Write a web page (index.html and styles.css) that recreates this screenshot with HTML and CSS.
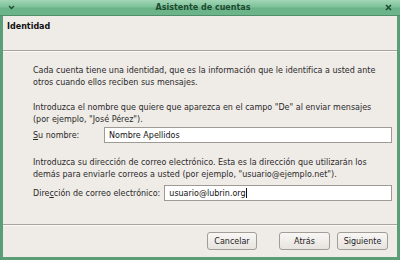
FILE: index.html
```html
<!DOCTYPE html>
<html lang="es">
<head>
<meta charset="utf-8">
<title>Asistente de cuentas</title>
<link rel="stylesheet" href="styles.css">
</head>
<body>
<div class="window">
  <div class="titlebar">
    <span class="menu-btn"><svg width="7" height="5" viewBox="0 0 7 5"><path d="M1 1 L3.5 3.5 L6 1" fill="none" stroke="#1e4a30" stroke-width="1.4"/></svg></span>
    <span class="title">Asistente de cuentas</span>
    <span class="close-btn"><svg width="7" height="7" viewBox="0 0 7 7"><path d="M1 1 L6 6 M6 1 L1 6" stroke="#1e4a30" stroke-width="1.6"/></svg></span>
  </div>
  <div class="body">
    <div class="header">Identidad</div>
    <div class="content">
      <p class="para">Cada cuenta tiene una identidad, que es la información que le identifica a usted ante<br>otros cuando ellos reciben sus mensajes.</p>
      <p class="para p2">Introduzca el nombre que quiere que aparezca en el campo "De" al enviar mensajes<br>(por ejemplo, "José Pérez").</p>
      <div class="row row-name">
        <label class="lbl lbl-name"><u>S</u>u nombre:</label>
        <div class="field">Nombre Apellidos</div>
      </div>
      <p class="para p3">Introduzca su dirección de correo electrónico. Esta es la dirección que utilizarán los<br>demás para enviarle correos a usted (por ejemplo, "usuario@ejemplo.net").</p>
      <div class="row row-mail">
        <label class="lbl">Dire<u>c</u>ción de correo electrónico:</label>
        <div class="field">usuario@lubrin.org<span class="caret"></span></div>
      </div>
    </div>
    <div class="footer">
      <button class="btn btn-cancel">Cancelar</button>
      <button class="btn btn-back">Atrás</button>
      <button class="btn btn-next">Siguiente</button>
    </div>
  </div>
</div>
</body>
</html>
```
FILE: styles.css
```css
* { box-sizing: border-box; }
html, body { margin: 0; padding: 0; }
body {
  width: 400px;
  height: 260px;
  overflow: hidden;
  font-family: "DejaVu Sans", sans-serif;
  font-size: 8px;
  color: #1a1a1a;
  background: #efebe7;
}
.window {
  width: 400px;
  height: 260px;
  display: flex;
  flex-direction: column;
  background: #5a9d77;
  padding: 0 3px 3px 3px;
}
.titlebar {
  height: 16px;
  flex: none;
  margin: 0 -3px;
  display: flex;
  align-items: center;
  padding: 0 8px 0 8px;
  background: linear-gradient(#a2d5b5, #7fc29a 45%, #6ab388 55%, #6db48b);
  border-bottom: 1px solid #4f8e6b;
}
.menu-btn { width: 12px; display: flex; }
.title {
  flex: 1;
  text-align: center;
  font-weight: bold;
  color: #1c4a2f;
  font-size: 8px;
  padding-left: 4px;
}
.close-btn { width: 10px; display: flex; justify-content: flex-end; }
.body {
  flex: 1;
  background: #efebe7;
  display: flex;
  flex-direction: column;
}
.header {
  height: 35px;
  flex: none;
  padding: 6px 0 0 4px;
  font-weight: bold;
  color: #111;
  border-bottom: 1px solid #a8a39d;
  box-shadow: 0 1px 0 #fbfaf9;
}
.content {
  padding: 14px 0 0 30px;
  flex: 1;
}
.para {
  margin: 0;
  line-height: 12px;
  white-space: nowrap;
  color: #2a2a2a;
}
.p2 { margin-top: 13px; }
.p3 { margin-top: 14px; }
.row {
  display: flex;
  align-items: center;
  height: 16px;
}
.row-name { margin-top: 1px; }
.row-mail { margin-top: 4px; }
.lbl { color: #2a2a2a; }
.lbl-name { width: 71px; }
.lbl u { text-decoration: underline; }
.field {
  flex: 1;
  margin-left: 4px;
  margin-right: 5px;
  height: 16px;
  background: #fff;
  border: 1px solid #9f9a94;
  padding: 0 4px;
  display: flex;
  align-items: center;
  color: #111;
}
.lbl-name + .field { margin-left: 0; }
.caret {
  display: inline-block;
  width: 1px;
  height: 10px;
  background: #111;
}
.footer {
  height: 33px;
  flex: none;
  border-top: 1px solid #a8a39d;
  box-shadow: inset 0 1px 0 #fbfaf9;
  display: flex;
  align-items: center;
  justify-content: flex-end;
  padding: 0 9px 0 0;
  gap: 7px;
}
.btn {
  font-family: "DejaVu Sans", sans-serif;
  font-size: 8px;
  color: #222;
  height: 18px;
  width: 51px;
  padding: 0;
  border: 1px solid #a29d96;
  border-radius: 3px;
  background: linear-gradient(#f8f7f5, #e7e3de);
}
.btn-cancel { width: 50px; margin-right: 15px; }
```
